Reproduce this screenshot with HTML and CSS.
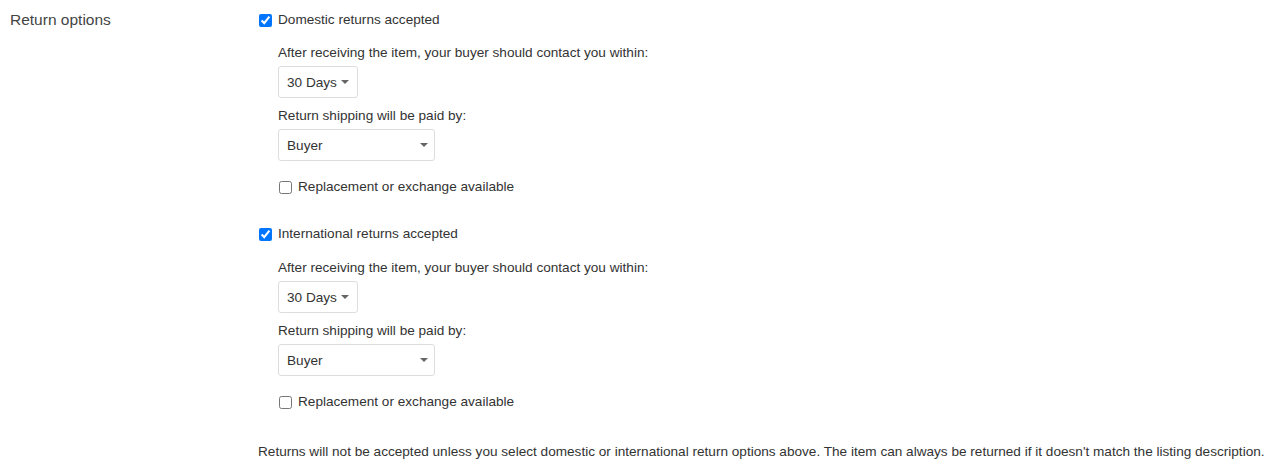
FILE: index.html
```html
<!DOCTYPE html>
<html>
<head>
<meta charset="utf-8">
<link rel="stylesheet" href="styles.css">
</head>
<body>
<div class="field">
  <div class="field-label">Return options</div>
  <div class="field-body">
    <section class="group">
      <label class="check-row"><input type="checkbox" checked><span>Domestic returns accepted</span></label>
      <div class="sub">
        <div class="sub-label first">After receiving the item, your buyer should contact you within:</div>
        <div class="select select-short"><span>30 Days</span><svg class="caret" width="8" height="4" viewBox="0 0 8 4"><path d="M0 0h8L4 4z" fill="#666"/></svg></div>
        <div class="sub-label">Return shipping will be paid by:</div>
        <div class="select select-wide"><span>Buyer</span><svg class="caret" width="8" height="4" viewBox="0 0 8 4"><path d="M0 0h8L4 4z" fill="#666"/></svg></div>
        <label class="check-row small"><input type="checkbox"><span>Replacement or exchange available</span></label>
      </div>
    </section>
    <section class="group">
      <label class="check-row"><input type="checkbox" checked><span>International returns accepted</span></label>
      <div class="sub">
        <div class="sub-label first">After receiving the item, your buyer should contact you within:</div>
        <div class="select select-short"><span>30 Days</span><svg class="caret" width="8" height="4" viewBox="0 0 8 4"><path d="M0 0h8L4 4z" fill="#666"/></svg></div>
        <div class="sub-label">Return shipping will be paid by:</div>
        <div class="select select-wide"><span>Buyer</span><svg class="caret" width="8" height="4" viewBox="0 0 8 4"><path d="M0 0h8L4 4z" fill="#666"/></svg></div>
        <label class="check-row small"><input type="checkbox"><span>Replacement or exchange available</span></label>
      </div>
    </section>
    <p class="note">Returns will not be accepted unless you select domestic or international return options above. The item can always be returned if it doesn't match the listing description.</p>
  </div>
</div>
</body>
</html>
```

FILE: styles.css
```css
html, body {
  margin: 0;
  padding: 0;
  background: #fff;
}
body {
  font-family: "Liberation Sans", Arial, sans-serif;
  color: #333;
  font-size: 13.6px;
}
.field {
  display: grid;
  grid-template-columns: 248px 1fr;
  padding: 10px 0 0 10px;
}
.field-label {
  font-size: 15.5px;
  line-height: 20px;
  color: #444;
}
.field-body {
  display: flex;
  flex-direction: column;
}
.group {
  display: flex;
  flex-direction: column;
  margin-bottom: 27px;
}
.group + .group {
  margin-bottom: 30px;
}
.group + .group .sub-label.first {
  margin-top: 14px;
}
.check-row {
  display: flex;
  align-items: center;
  height: 20px;
  line-height: 20px;
}
.check-row input {
  width: 13px;
  height: 13px;
  margin: 0 6px 0 1px;
  accent-color: #0075ff;
}
.sub {
  display: flex;
  flex-direction: column;
  align-items: flex-start;
  padding-left: 20px;
}
.sub-label {
  line-height: 20px;
  margin-top: 8px;
  margin-bottom: 3px;
}
.sub-label.first {
  margin-top: 13px;
}
.select {
  box-sizing: border-box;
  height: 32px;
  border: 1px solid #ddd;
  border-radius: 3px;
  display: flex;
  align-items: center;
  padding-left: 8px;
  background: #fff;
}
.select-short {
  width: 80px;
}
.select-short .caret {
  margin-left: 4px;
}
.select-wide {
  width: 157px;
  justify-content: space-between;
  padding-right: 6px;
}
.check-row.small {
  margin-top: 16px;
}
.note {
  margin: 0;
  line-height: 20px;
}
```
